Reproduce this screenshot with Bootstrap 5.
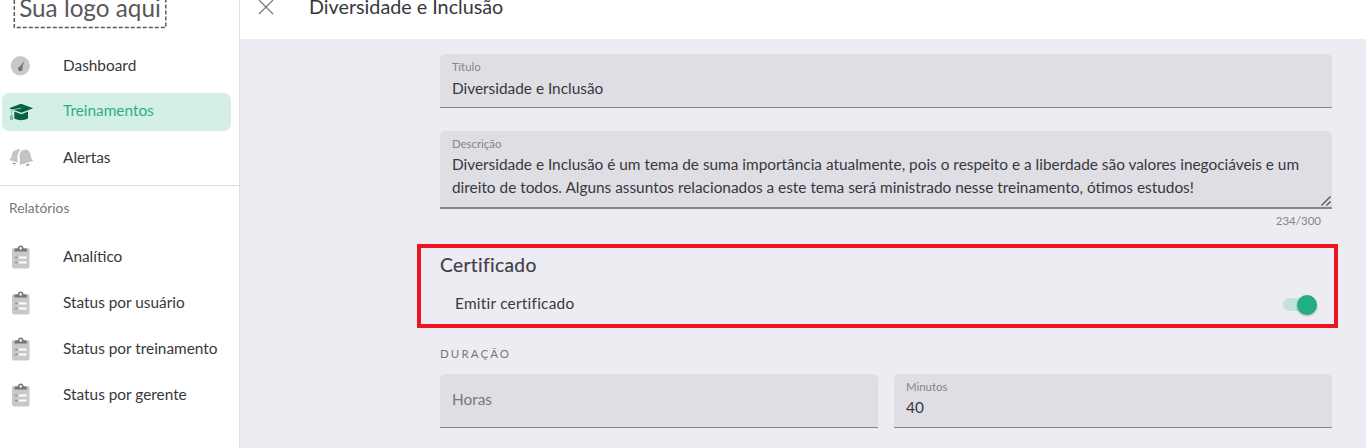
<!DOCTYPE html>
<html lang="pt-BR">
<head>
    <meta charset="UTF-8">
    <meta name="viewport" content="width=device-width, initial-scale=1.0">
    <title>Diversidade e Inclusão</title>
    <link href="https://cdn.jsdelivr.net/npm/bootstrap@5.3.1/dist/css/bootstrap.min.css" rel="stylesheet">
    <style>
        body {
            background-color: #edecf2;
            color: #38383c;
            font-family: Lato, "Open Sans", sans-serif;
            font-size: 15.39px;
            height: 448px;
            overflow: hidden;
        }
        .sidebar {
            width: 240px;
            border-right: 1px solid #e0e0e2;
        }
        .logo-area {
            height: 29px;
            margin-bottom: 18px;
            padding-left: 13px;
        }
        .logo-box {
            width: 154px;
            height: 60px;
            color: #58585a;
            font-size: 24.3px;
            line-height: 36px;
            padding-bottom: 3px;
            white-space: nowrap;
        }
        .side-item {
            height: 38px;
            margin: 0 8px 8px 2px;
            padding-left: 6px;
            border-radius: 7px;
            color: #38383c;
            text-decoration: none;
        }
        .side-item svg {
            width: 26px;
            height: 26px;
            margin-right: 29px;
        }
        .side-item span {
            margin-top: -1px;
        }
        .side-item.selected {
            background-color: #d4efe6;
            color: #2bae87;
        }
        .side-item.selected span {
            margin-top: -3px;
        }
        .side-title {
            height: 53px;
            padding: 12px 0 0 9px;
            border-top: 1px solid #dedee0;
            color: #77777b;
            font-size: 13.8px;
        }
        .topbar {
            height: 39px;
            padding-left: 18px;
        }
        .topbar h1 {
            font-size: 19.75px;
            line-height: 24px;
            margin: -5px 0 0 35px;
        }
        .form-area {
            padding: 15px 34px 0 200px;
        }
        .field {
            height: 54px;
            padding: 5px 12px;
            background-color: #dfdee4;
            border-bottom: 1px solid #85858a;
            border-radius: 5px 5px 0 0;
        }
        .field-label {
            color: #858589;
            font-size: 11.4px;
            line-height: 15px;
        }
        .field-value {
            line-height: 23px;
            margin-top: 3px;
        }
        .field-area {
            height: 78px;
            margin-top: 23px;
            border-bottom-width: 2px;
        }
        .field-area .field-value {
            margin-top: 2px;
            white-space: nowrap;
        }
        .field-empty {
            padding-bottom: 7px;
            color: #77777b;
        }
        .field-minutes .field-value {
            margin-top: 2px;
        }
        .counter {
            height: 35px;
            padding: 3px 11px 0 0;
            color: #858589;
            font-size: 11.5px;
            line-height: 17px;
        }
        .highlight {
            height: 84px;
            margin: 0 -6px 0 -23px;
            padding: 5px 17px 0 19px;
            border: 4px solid #ed1520;
        }
        .highlight h2 {
            font-size: 19.2px;
            letter-spacing: .34px;
            line-height: 24px;
            margin-bottom: 15px;
            color: #3f3f48;
            -webkit-text-stroke: .2px #3f3f48;
        }
        .switch-label {
            margin-left: 15px;
            letter-spacing: .25px;
        }
        .toggle-track {
            width: 34px;
            height: 13px;
            margin-top: 6px;
            border-radius: 7px;
            background-color: #c4e2da;
        }
        .toggle-thumb {
            width: 20px;
            height: 20px;
            border-radius: 50%;
            background-color: #24ad83;
            box-shadow: 0 1px 2px rgba(0, 0, 0, .3);
        }
        .section-label {
            color: #77777b;
            font-size: 11.5px;
            letter-spacing: 2.1px;
            line-height: 16px;
            margin: 18px 0 12px;
        }
    </style>
</head>
<body class="d-flex">

    <!-- Clipboard icon shared by the report links -->
    <svg class="d-none">
        <symbol id="clipboard" viewBox="0 0 26 26">
            <rect x="4" y="4" width="17.5" height="20.5" rx="2" fill="#c8c8c8"/>
            <path d="M6.500 7.500V5.800q0-1.200 1.200-1.200h2Q10.200 1.500 12.700 1.500T15.700 4.600h2q1.200 0 1.200 1.200v1.700z" fill="#757575"/>
            <circle cx="12.700" cy="4.400" r="1.300" fill="#eee"/>
            <path d="M11 13.500h7.500M11 18.500h7.500" stroke="#fff" stroke-width="1.800"/>
            <path d="M7.300 13.500h1.800M7.300 18.500h1.800" stroke="#808080" stroke-width="1.600"/>
        </symbol>
    </svg>

    <nav class="sidebar bg-white flex-shrink-0">
        <div class="logo-area d-flex align-items-end">
            <div class="logo-box position-relative d-flex align-items-end justify-content-center flex-shrink-0">
                <svg class="position-absolute top-0 start-0" width="154" height="60">
                    <rect x="1.300" y="1" width="151.500" height="57.500" fill="none" stroke="#5c5c5c" stroke-width="1.500" stroke-dasharray="4 2"/>
                </svg>
                Sua logo aqui
            </div>
        </div>
        <a href="#" class="side-item d-flex align-items-center">
            <svg viewBox="0 0 26 26">
                <circle cx="12.300" cy="12.700" r="9.600" fill="#c8c8c8"/>
                <path d="M16.500 7.700 11.300 14.200l2.600 1.500z" fill="#8a7468"/>
                <circle cx="12.300" cy="15.800" r="2.400" fill="#747478"/>
            </svg>
            <span>Dashboard</span>
        </a>
        <a href="#" class="side-item selected d-flex align-items-center">
            <svg viewBox="0 0 26 26">
                <path d="M1 9.200 13 4.800 25.200 9.300 13.500 13.800z" fill="#0b6044"/>
                <path d="M6.300 12.500v7q6.500 3.600 13.700 0v-7l-6.500 2.700z" fill="#0b6044"/>
                <path d="M13 9.200 3.500 11v7" fill="none" stroke="#8cb9a8" stroke-width="1"/>
                <path d="M2.300 16.500h2.500l.4 4.300H1.800z" fill="#7eae9c"/>
            </svg>
            <span>Treinamentos</span>
        </a>
        <a href="#" class="side-item d-flex align-items-center">
            <svg viewBox="0 0 26 26">
                <path d="M8.500 5q2-1.400 4-.5-4.300 4.300-2.800 13L1 15q2.800-2 3-5.500.5-3.700 4.500-4.500z" fill="#c4c4c4"/>
                <path d="M11.500 20q1.300-4.500-.1-9.500 1-6 6-6 4.300.2 5 5 .5 4.300 2.700 6.500z" fill="#c4c4c4"/>
                <path d="m4.200 17.500 4.200 1.300q-2.600 1.600-4.200-1.300zM17.500 20l4.200-1.200q-1.400 3-4.200 1.200z" fill="#777"/>
            </svg>
            <span>Alertas</span>
        </a>
        <div class="side-title">Relatórios</div>
        <a href="#" class="side-item d-flex align-items-center"><svg><use href="#clipboard"/></svg><span>Analítico</span></a>
        <a href="#" class="side-item d-flex align-items-center"><svg><use href="#clipboard"/></svg><span>Status por usuário</span></a>
        <a href="#" class="side-item d-flex align-items-center"><svg><use href="#clipboard"/></svg><span>Status por treinamento</span></a>
        <a href="#" class="side-item d-flex align-items-center"><svg><use href="#clipboard"/></svg><span>Status por gerente</span></a>
    </nav>

    <main class="flex-grow-1">
        <header class="topbar bg-white d-flex align-items-start">
            <svg width="16" height="16" viewBox="0 0 16 16">
                <path d="M1 0 15 14M15 0 1 14" stroke="#77777b" stroke-width="1.200"/>
            </svg>
            <h1 class="fw-normal">Diversidade e Inclusão</h1>
        </header>

        <div class="form-area">
            <div class="field">
                <div class="field-label">Título</div>
                <div class="field-value">Diversidade e Inclusão</div>
            </div>

            <div class="field field-area position-relative">
                <div class="field-label">Descrição</div>
                <div class="field-value">Diversidade e Inclusão é um tema de suma importância atualmente, pois o respeito e a liberdade são valores inegociáveis e um<br>direito de todos. Alguns assuntos relacionados a este tema será ministrado nesse treinamento, ótimos estudos!</div>
                <svg class="position-absolute bottom-0 end-0" width="12" height="12" viewBox="0 0 12 12">
                    <path d="M1.500 10.500 10.500 1.500M6.500 10.500 10.500 6.500" stroke="#505055" stroke-width="1.300"/>
                </svg>
            </div>
            <div class="counter text-end">234/300</div>

            <section class="highlight">
                <h2 class="fw-normal">Certificado</h2>
                <div class="d-flex justify-content-between align-items-start">
                    <span class="switch-label">Emitir certificado</span>
                    <div class="toggle-track d-flex align-items-center justify-content-end">
                        <div class="toggle-thumb flex-shrink-0"></div>
                    </div>
                </div>
            </section>

            <div class="section-label">DURAÇÃO</div>
            <div class="row gx-3">
                <div class="col-6">
                    <div class="field field-empty d-flex align-items-center">Horas</div>
                </div>
                <div class="col-6">
                    <div class="field field-minutes">
                        <div class="field-label">Minutos</div>
                        <div class="field-value">40</div>
                    </div>
                </div>
            </div>
        </div>
    </main>

    <script src="https://cdn.jsdelivr.net/npm/bootstrap@5.3.1/dist/js/bootstrap.bundle.min.js"></script>
</body>
</html>
